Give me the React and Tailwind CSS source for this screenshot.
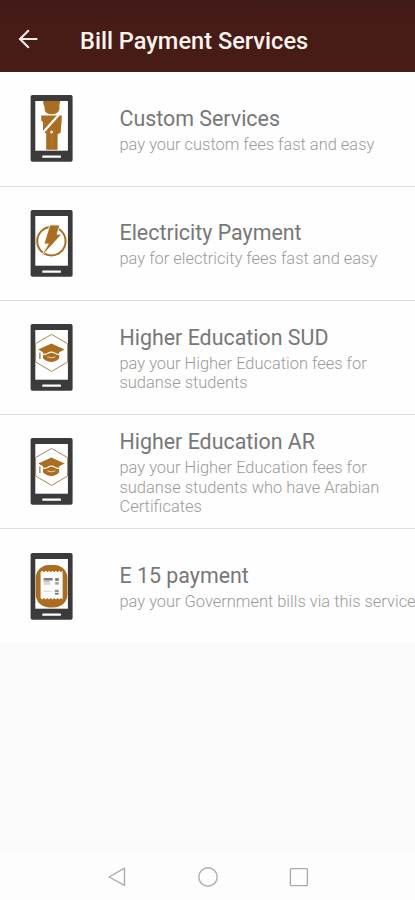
import React from "react";

const BROWN = "#ab6d20";

// Officer figure with a sash across the chest
const OfficerArt = () => (
  <>
    <g fill={BROWN}>
      <path d="M12.6 6H29.6L28.8 10.5Q29.6 14 27.6 17Q25.5 19.2 21.2 19.2Q16.5 19.2 14.6 16.5Q13.6 14 14 11.5L12.8 9.5Z" />
      <path d="M10.6 20.5H31.2V24L30 37.8L27 39.2V54.8H15.6V38.2L12.4 37.3V27.3L10.6 25.6Z" />
    </g>
    <path d="M12.6 37.2L28 20" stroke="#fff" strokeWidth="2.3" />
    <circle cx="21" cy="37" r="1.5" fill="#f3e6d2" />
    <path d="M21.4 40V54.5" stroke="#bb8543" strokeWidth="0.6" />
  </>
);

const BoltArt = () => (
  <>
    <circle
      cx="20.8"
      cy="31.2"
      r="14.2"
      fill="none"
      stroke={BROWN}
      strokeWidth="2"
    />
    <path
      d="M19.2 15H29.2L26.4 24.2H31.2L9.4 48L17.8 34H13.4Z"
      fill={BROWN}
      stroke="#fff"
      strokeWidth="0.8"
    />
  </>
);

const GraduationArt = () => (
  <>
    <path
      d="M21 10.4L37 19.6V38L21 47.4L5 38V19.6Z"
      fill="none"
      stroke="#a38a55"
      strokeWidth="1"
    />
    <g fill={BROWN}>
      <path d="M20.8 19.4L34 25.4L28.6 28.2V34.2Q25.4 38 20.8 38Q16 38 12.4 34.2V28.2L7.6 25.4Z" />
    </g>
    {/* gap between the board and the cap */}
    <path
      d="M11.8 30.2Q15.6 30.8 17.4 29.2Q20.8 27 24.2 29.2Q26 30.8 29.4 30.2"
      fill="none"
      stroke="#fff"
      strokeWidth="1.1"
    />
    <path d="M16.8 32.8Q20.8 35 24.8 32.8" fill="none" stroke="#f0dfc6" strokeWidth="0.9" />
    <path d="M9.3 28.6V35" stroke="#8d7450" strokeWidth="1.2" />
  </>
);

const ReceiptArt = () => (
  <>
    <rect x="5.2" y="12" width="31.6" height="42.4" rx="13" fill={BROWN} />
    <path
      d="M10 19.2L11.7 17.7L13.4 19.2L15.1 17.7L16.8 19.2L18.5 17.7L20.2 19.2L21.9 17.7L23.6 19.2L25.3 17.7L27 19.2L28.7 17.7L30.4 19.2L32 17.7V46.5L30.4 45L28.7 46.5L27 45L25.3 46.5L23.6 45L21.9 46.5L20.2 45L18.5 46.5L16.8 45L15.1 46.5L13.4 45L11.7 46.5L10 45Z"
      fill="#fff"
    />
    <g fill="#77777e">
      <rect x="13" y="25.1" width="9" height="2.4" />
      <rect x="13" y="28.2" width="6" height="1.2" opacity="0.6" />
      <rect x="13" y="30.5" width="7" height="0.9" opacity="0.6" />
      <rect x="24.6" y="25.1" width="3.6" height="2.8" />
      <rect x="24.6" y="29" width="3.6" height="2.6" opacity="0.7" />
      <rect x="13" y="37.8" width="8" height="0.8" opacity="0.4" />
      <rect x="24.2" y="36.8" width="4" height="2.2" opacity="0.8" />
      <rect x="24.2" y="39.8" width="4" height="1.8" />
    </g>
  </>
);

const PhoneIcon = ({ children }) => (
  <svg viewBox="-0.6 0 43 67" className="h-[67px] w-[43px] shrink-0">
    <rect width="42" height="66.7" rx="1.8" fill="#3b3b3c" />
    <rect x="4.7" y="6" width="32.6" height="49.7" fill="#fff" />
    <rect x="11.7" y="60.4" width="18.6" height="2.4" rx="0.4" fill="#fff" />
    {children}
  </svg>
);

const services = [
  {
    title: "Custom Services",
    lines: ["pay your custom fees fast and easy"],
    art: <OfficerArt />,
  },
  {
    title: "Electricity Payment",
    lines: ["pay for electricity fees fast and easy"],
    art: <BoltArt />,
  },
  {
    title: "Higher Education SUD",
    lines: ["pay your Higher Education fees for", "sudanse students"],
    art: <GraduationArt />,
  },
  {
    title: "Higher Education AR",
    lines: [
      "pay your Higher Education fees for",
      "sudanse students who have Arabian",
      "Certificates",
    ],
    art: <GraduationArt />,
  },
  {
    title: "E 15 payment",
    lines: ["pay your Government bills via this service"],
    art: <ReceiptArt />,
  },
];

const ServiceRow = ({ title, lines, art }) => (
  <li className="flex h-[114.2px] items-center border-b border-[#dedede] bg-[#fefefe] pl-[30px] last:border-b-0">
    <PhoneIcon>{art}</PhoneIcon>
    <div className="ml-[46.5px] whitespace-nowrap pt-[1.5px]">
      <h2 className="text-[21.4px] leading-[26px] font-normal text-[#777777]">
        {title}
      </h2>
      <p className="-mb-px pt-[3px] text-[16.46px] leading-[19.5px] font-light text-[#9a9a9a]">
        {lines.map((line) => (
          <span key={line} className="block">
            {line}
          </span>
        ))}
      </p>
    </div>
  </li>
);

const NavBar = () => (
  <nav className="flex h-12 items-center justify-between bg-[#fdfdfd] pt-px pr-[106px] pl-[107px]">
    <svg viewBox="0 0 20 20" className="size-5" fill="none" stroke="#acacac" strokeWidth="1.4" strokeLinejoin="round">
      <path d="M17.5 1.2V18.4L2 10Z" />
    </svg>
    <svg viewBox="0 0 20 20" className="size-5" fill="none" stroke="#acacac" strokeWidth="1.4">
      <circle cx="10" cy="10" r="9.2" />
    </svg>
    <svg viewBox="0 0 20 20" className="size-5" fill="none" stroke="#acacac" strokeWidth="1.4">
      <rect x="1.4" y="1.6" width="17" height="17" rx="0.8" />
    </svg>
  </nav>
);

export default function App() {
  return (
    <div className="flex h-[900px] w-[415px] flex-col overflow-hidden bg-[#fafafa] font-[Roboto,sans-serif]">
      <header className="flex h-[72.4px] shrink-0 items-center bg-linear-to-b from-[#401b18] via-[#471b16] via-30% to-[#471b16] pt-2.5 pl-[18px]">
        <svg
          viewBox="0 0 20 20"
          className="-mt-1 size-5"
          fill="none"
          stroke="#f3e9e6"
          strokeWidth="2.2"
        >
          <path d="M19.4 10H2M10.8 1.2L2 10L10.8 18.8" />
        </svg>
        <h1 className="ml-[42px] text-[23.6px] leading-7 font-medium text-[#fbf3ee]">
          Bill Payment Services
        </h1>
      </header>
      <ul className="flex-1">
        {services.map((service) => (
          <ServiceRow key={service.title} {...service} />
        ))}
      </ul>
      <NavBar />
    </div>
  );
}
